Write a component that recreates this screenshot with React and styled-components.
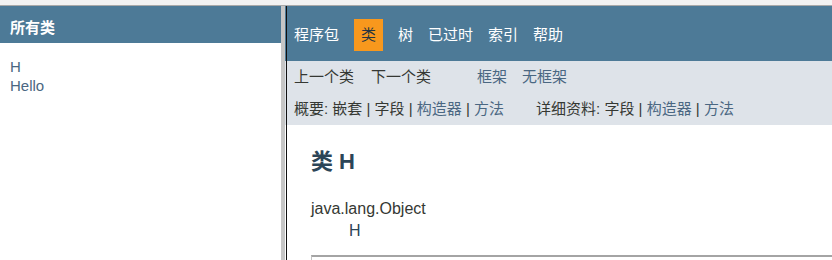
import styled, { createGlobalStyle } from 'styled-components';

const GlobalStyle = createGlobalStyle`
    html, body {
        margin: 0;
        padding: 0;
        height: 100%;
        background: #ffffff;
    }
    body {
        font-family: "Liberation Sans", Arial, "Noto Sans CJK SC", sans-serif;
        font-size: 15px;
        color: #353833;
    }
    #root {
        height: 100%;
    }
`;

const Page = styled.div`
    display: flex;
    flex-direction: column;
    height: 260px;
    overflow: hidden;
`;

const TopStrip = styled.div`
    height: 5px;
    flex: none;
    background: #f2f2f2;
    border-bottom: 1px solid #a9a9a9;
`;

const Frames = styled.div`
    flex: 1;
    display: flex;
    min-height: 0;
`;

const LeftFrame = styled.div`
    width: 281px;
    flex: none;
    background: #ffffff;
`;

const FrameHeader = styled.div`
    height: 37px;
    box-sizing: border-box;
    padding: 13px 10px 0;
    background: #4d7a97;
    color: #ffffff;
    font-weight: bold;
    font-size: 15px;
    line-height: 18px;
`;

const ClassList = styled.ul`
    list-style: none;
    margin: 14px 0 0;
    padding: 0 10px;
    line-height: 19px;
`;

const ClassLink = styled.li`
    color: #4a6782;
`;

const Divider = styled.div`
    width: 4px;
    flex: none;
    background: #c6c6c6;
`;

const RightFrame = styled.div`
    flex: 1;
    position: relative;
    display: flex;
    flex-direction: column;

    &::before {
        content: "";
        position: absolute;
        left: 1px;
        top: 0;
        bottom: 0;
        width: 1px;
        background: #111111;
    }
`;

const TopNav = styled.ul`
    display: flex;
    align-items: center;
    gap: 15px;
    height: 55px;
    box-sizing: border-box;
    margin: 0;
    padding: 13px 0 10px 9px;
    list-style: none;
    background: #4d7a97;
`;

const NavItem = styled.li`
    height: 32px;
    line-height: 32px;
    padding: ${p => (p.$active ? '0 7px' : '0')};
    background: ${p => (p.$active ? '#f8981d' : 'transparent')};
    color: ${p => (p.$active ? '#253441' : '#ffffff')};
    font-size: 15px;
`;

const SubNav = styled.div`
    background: #dee3e9;
    padding-left: 9px;
`;

const SubRow = styled.div`
    display: flex;
    height: 32px;
    line-height: 32px;
    white-space: nowrap;
`;

const Group = styled.span`
    margin-right: ${p => p.$gap || 0}px;
`;

const Link = styled.span`
    color: #4a6782;
    margin-right: ${p => p.$gap || 0}px;
`;

const Plain = styled.span`
    color: #353833;
    margin-right: ${p => p.$gap || 0}px;
`;

const Content = styled.div`
    padding: 23px 0 0 26px;
`;

const Title = styled.h2`
    margin: 0;
    font-size: 22px;
    line-height: 28px;
    font-weight: bold;
    color: #2c4557;
`;

const Inheritance = styled.div`
    margin-top: 22px;
    font-size: 16px;
    line-height: 22px;
    color: #353833;
`;

const Child = styled.div`
    padding-left: 38px;
    color: #2c4557;
`;

const DescBox = styled.div`
    margin-top: 13px;
    height: 20px;
    border-top: 2px solid #a4a4a4;
    border-left: 1px solid #c4c4c4;
    background: #ffffff;
`;

function App() {
    return (
        <Page>
            <GlobalStyle />
            <TopStrip />
            <Frames>
                <LeftFrame>
                    <FrameHeader>所有类</FrameHeader>
                    <ClassList>
                        <ClassLink>H</ClassLink>
                        <ClassLink>Hello</ClassLink>
                    </ClassList>
                </LeftFrame>

                <Divider />

                <RightFrame>
                    <TopNav>
                        <NavItem>程序包</NavItem>
                        <NavItem $active>类</NavItem>
                        <NavItem>树</NavItem>
                        <NavItem>已过时</NavItem>
                        <NavItem>索引</NavItem>
                        <NavItem>帮助</NavItem>
                    </TopNav>

                    <SubNav>
                        <SubRow>
                            <Plain $gap={17}>上一个类</Plain>
                            <Plain $gap={46}>下一个类</Plain>
                            <Link $gap={15}>框架</Link>
                            <Link>无框架</Link>
                        </SubRow>
                        <SubRow>
                            <Group $gap={32}>
                                概要: 嵌套 | 字段 | <Link>构造器</Link> | <Link>方法</Link>
                            </Group>
                            <Group>
                                详细资料: 字段 | <Link>构造器</Link> | <Link>方法</Link>
                            </Group>
                        </SubRow>
                    </SubNav>

                    <Content>
                        <Title>类 H</Title>
                        <Inheritance>
                            java.lang.Object
                            <Child>H</Child>
                        </Inheritance>
                        <DescBox />
                    </Content>
                </RightFrame>
            </Frames>
        </Page>
    );
}

export default App;
